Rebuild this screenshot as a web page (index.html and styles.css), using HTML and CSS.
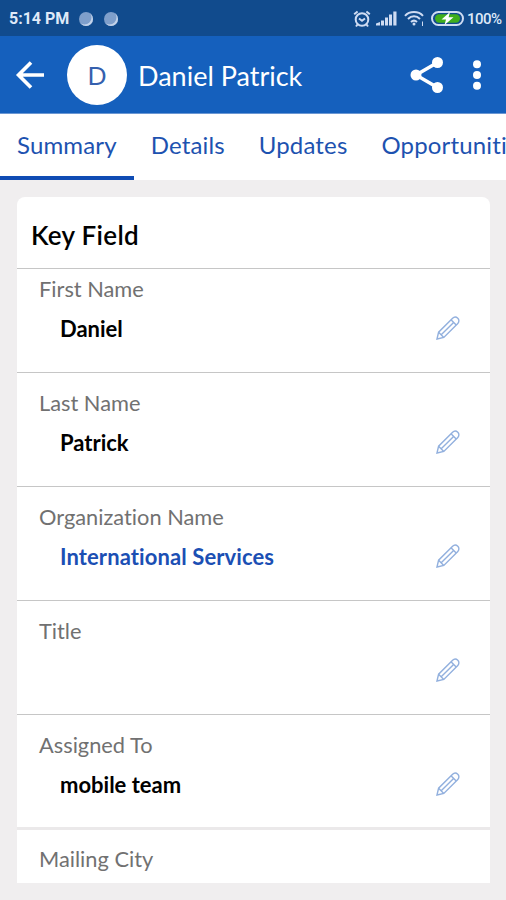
FILE: index.html
```html
<!DOCTYPE html>
<html lang="en">
<head>
    <meta charset="UTF-8">
    <meta name="viewport" content="width=device-width, initial-scale=1.0">
    <title>Daniel Patrick</title>
    <link rel="stylesheet" href="styles.css">
</head>
<body>
    <!-- Pencil shared by every editable row -->
    <svg class="sprite" aria-hidden="true">
        <symbol id="pencil" viewBox="0 0 24 24">
            <path d="M1 23 2.6 16.2 16.6 2.2C18 .8 20.3 .8 21.8 2.2S23.200 6 21.800 7.400L7.800 21.400Z"/>
            <path d="M2.600 16.200 7.800 21.400M15 3.800 20.200 9M5.200 18.800 17.600 6.400"/>
        </symbol>
    </svg>

    <div class="status-bar">
        <span class="clock">5:14 PM</span>
        <span class="dot"></span>
        <span class="dot"></span>
        <div class="status-icons">
            <svg class="alarm" width="18" height="18" viewBox="0 0 18 18">
                <circle cx="9" cy="9.500" r="6.300"/>
                <path d="M1.200 4.200 4.600 1.400M16.800 4.200 13.400 1.400M6 8.500 9 10.800 12 8.500M4.500 14.500 3 16.500M13.500 14.500 15 16.500"/>
            </svg>
            <svg class="signal" width="21" height="15" viewBox="0 0 21 15">
                <path d="M0 14.500V12.500L4 11V14.500ZM5 14.500V9.500H8V14.500ZM9 14.500V6.500H12V14.500ZM13 14.500V3.500H16V14.500ZM17.300 14.500V.5H20.500V14.500Z"/>
            </svg>
            <svg class="wifi" width="21" height="17" viewBox="0 0 21 17">
                <path d="M1 5.800C5.500 .8 14.500 .8 19 5.800M4 9C7.500 5.400 12.500 5.400 16 9M7 12C9 10.200 11 10.200 13 12"/>
                <circle cx="10" cy="14" r="1.500"/>
                <path class="thin" d="M18.500 11.500V16"/>
            </svg>
            <svg class="battery" width="33" height="15" viewBox="0 0 33 15">
                <rect class="shell" x="1" y="1" width="31" height="13" rx="6.500"/>
                <rect class="charge" x="4" y="3.300" width="25" height="8.400" rx="4.200"/>
                <path class="bolt" d="M19 1 10.500 8.500H15L13.500 14 22.500 6.300H17.600Z"/>
            </svg>
            <span class="percent">100%</span>
        </div>
    </div>

    <header class="app-bar">
        <svg class="back" width="30" height="28" viewBox="0 0 30 28">
            <path d="M29 14H4M16 1.500 3.500 14 16 26.500"/>
        </svg>
        <div class="avatar">D</div>
        <h1>Daniel Patrick</h1>
        <svg class="share" width="34" height="36" viewBox="0 0 34 36">
            <path d="M27.500 5.500 6 18 27.500 30.500"/>
            <circle cx="27.500" cy="5.500" r="5.500"/>
            <circle cx="6" cy="18" r="5.500"/>
            <circle cx="27.500" cy="30.500" r="5.500"/>
        </svg>
        <svg class="more" width="10" height="30" viewBox="0 0 10 30">
            <circle cx="5" cy="4.300" r="4"/>
            <circle cx="5" cy="15" r="4"/>
            <circle cx="5" cy="25.700" r="4"/>
        </svg>
    </header>

    <nav class="tabs">
        <a class="tab active">Summary</a>
        <a class="tab">Details</a>
        <a class="tab">Updates</a>
        <a class="tab">Opportunities</a>
    </nav>

    <main class="card">
        <h2>Key Field</h2>
        <div class="field first">
            <div class="label">First Name</div>
            <div class="value"><span>Daniel</span><svg class="edit"><use href="#pencil"/></svg></div>
        </div>
        <div class="field">
            <div class="label">Last Name</div>
            <div class="value"><span>Patrick</span><svg class="edit"><use href="#pencil"/></svg></div>
        </div>
        <div class="field">
            <div class="label">Organization Name</div>
            <div class="value link"><span>International Services</span><svg class="edit"><use href="#pencil"/></svg></div>
        </div>
        <div class="field">
            <div class="label">Title</div>
            <div class="value"><span></span><svg class="edit"><use href="#pencil"/></svg></div>
        </div>
        <div class="field assigned">
            <div class="label">Assigned To</div>
            <div class="value"><span>mobile team</span><svg class="edit"><use href="#pencil"/></svg></div>
        </div>
        <div class="field last">
            <div class="label">Mailing City</div>
        </div>
    </main>
</body>
</html>
```
FILE: styles.css
```css
* {
    box-sizing: border-box;
}

body {
    margin: 0;
    height: 900px;
    overflow: hidden;
    background-color: #f0eeef;
    font-family: Lato, sans-serif;
    font-variant-ligatures: none;
}

svg {
    display: block;
    flex: none;
}

.sprite {
    display: none;
}

/* Status bar */
.status-bar {
    display: flex;
    align-items: center;
    height: 36px;
    padding: 1px 4px 0 9px;
    background-color: #114b8d;
    color: #dfe9f8;
    font-family: Roboto, sans-serif;
}

.clock {
    width: 70px;
    font-size: 16px;
    font-weight: 700;
}

.dot {
    width: 14px;
    height: 14px;
    margin-right: 11px;
    border-radius: 50%;
    background-color: #7f9fcb;
    box-shadow: inset -1.5px -1.5px 0 #c3d3ea;
}

.status-icons {
    display: flex;
    align-items: center;
    margin-left: auto;
}

.alarm, .wifi {
    fill: none;
    stroke: #cfdcf3;
    stroke-width: 2;
}

.signal {
    margin-left: 5px;
    fill: #cfdcf3;
}

.wifi {
    margin-left: 7px;
}

.wifi circle {
    fill: #cfdcf3;
    stroke: none;
}

.wifi .thin {
    stroke-width: 1;
}

.battery {
    margin-left: 6px;
}

.shell {
    fill: #114b8d;
    stroke: #cfdcf3;
    stroke-width: 2;
}

.charge {
    fill: #3fae1c;
}

.bolt {
    fill: #ffffff;
}

.percent {
    width: 35px;
    margin-left: 3px;
    font-size: 15px;
    font-weight: 500;
    letter-spacing: -0.5px;
}

/* App bar */
.app-bar {
    display: flex;
    align-items: center;
    height: 78px;
    padding: 0 24px 0 15px;
    background-color: #1560bd;
    border-bottom: 1px solid #6b97d3;
}

.back {
    fill: none;
    stroke: #ffffff;
    stroke-width: 3.6;
}

.avatar {
    width: 60px;
    height: 60px;
    margin-left: 22px;
    border-radius: 50%;
    background-color: #ffffff;
    color: #3560ae;
    font-size: 25px;
    line-height: 60px;
    text-align: center;
}

h1 {
    margin: 2px auto 0 11px;
    color: #ffffff;
    font-size: 27px;
    font-weight: 400;
}

.share {
    margin-right: 28px;
    fill: #ffffff;
    stroke: #ffffff;
}

.share path {
    fill: none;
    stroke-width: 3.5;
}

.share circle {
    stroke: none;
}

.more {
    fill: #ffffff;
}

/* Tabs */
.tabs {
    display: flex;
    height: 66px;
    overflow: hidden;
    background-color: #ffffff;
}

.tab {
    flex: none;
    padding: 0 17px;
    color: #1d52b0;
    font-size: 24px;
    letter-spacing: 0.15px;
    line-height: 62px;
}

.tab.active {
    border-bottom: 4px solid #0f4cb4;
}

/* Key fields */
.card {
    width: 473px;
    height: 686px;
    margin: 17px 0 0 17px;
    border-radius: 8px 8px 0 0;
    background-color: #ffffff;
}

h2 {
    height: 72px;
    margin: 0;
    padding-left: 14px;
    border-bottom: 1px solid #c6c6c6;
    color: #000000;
    font-size: 26px;
    font-weight: 600;
    letter-spacing: 0.3px;
    line-height: 76px;
}

.field {
    height: 114px;
    padding: 14px 30px 0 22px;
    border-bottom: 1px solid #c6c6c6;
}

.field.first {
    height: 104px;
    padding-top: 4px;
}

.field.assigned {
    height: 115px;
    border-bottom: 3px solid #ebe9ea;
}

.field.last {
    height: 53px;
    padding-top: 13px;
    border-bottom: none;
}

.label {
    color: #717171;
    font-size: 21.8px;
    line-height: 32px;
}

.value {
    display: flex;
    align-items: center;
    justify-content: space-between;
    height: 32px;
    margin-top: 7px;
    padding-left: 21px;
    color: #000000;
    font-size: 22px;
    font-weight: 700;
}

.value.link {
    color: #1b4fb4;
    letter-spacing: 0.1px;
}

.edit {
    width: 24px;
    height: 24px;
    fill: none;
    stroke: #92b0de;
    stroke-width: 1.4;
}
```
